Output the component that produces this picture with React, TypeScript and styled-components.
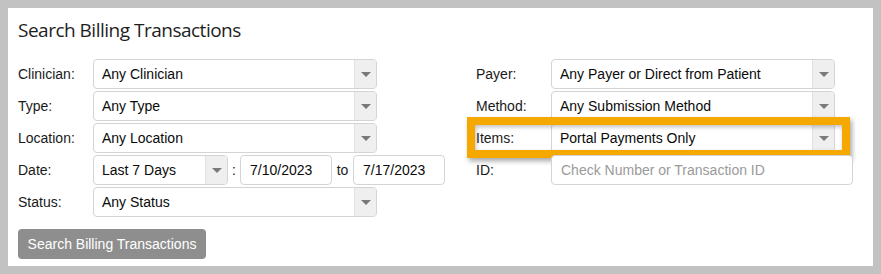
import React from 'react'
import styled, { createGlobalStyle } from 'styled-components'

const GlobalStyle = createGlobalStyle`
  html, body {
    background: #c2c2c2;
  }
  body {
    margin: 8px;
    font-family: "Liberation Sans", Arial, sans-serif;
  }
`

const LEFT_FIELDS = [
  { label: 'Clinician:', value: 'Any Clinician' },
  { label: 'Type:', value: 'Any Type' },
  { label: 'Location:', value: 'Any Location' },
]

const RIGHT_FIELDS = [
  { label: 'Payer:', value: 'Any Payer or Direct from Patient' },
  { label: 'Method:', value: 'Any Submission Method' },
]

const Select = ({ value, width }: { value: string; width: number }) => (
  <SelectBox $width={width}>
    <SelectValue>{value}</SelectValue>
    <ArrowCell />
  </SelectBox>
)

const App = () => {
  return (
    <>
      <GlobalStyle />
      <Panel>
        <Title>Search Billing Transactions</Title>

        <Columns>
          {/* left side */}
          <Column $width={428}>
            {LEFT_FIELDS.map(f => (
              <Row key={f.label}>
                <Label>{f.label}</Label>
                <Select value={f.value} width={284} />
              </Row>
            ))}
            <Row>
              <Label>Date:</Label>
              <Select value="Last 7 Days" width={135} />
              <Joiner $width={12}>:</Joiner>
              <TextInput $width={92} readOnly value="7/10/2023" />
              <Joiner $width={21}>to</Joiner>
              <TextInput $width={92} readOnly value="7/17/2023" />
            </Row>
            <Row>
              <Label>Status:</Label>
              <Select value="Any Status" width={284} />
            </Row>
          </Column>

          {/* right side */}
          <Column $width={378}>
            {RIGHT_FIELDS.map(f => (
              <Row key={f.label}>
                <Label>{f.label}</Label>
                <Select value={f.value} width={284} />
              </Row>
            ))}
            <Row>
              <Label>Items:</Label>
              <Select value="Portal Payments Only" width={284} />
              <Highlight />
            </Row>
            <Row>
              <Label>ID:</Label>
              <TextInput $width={302} placeholder="Check Number or Transaction ID" />
            </Row>
          </Column>
        </Columns>

        <SearchButton type="button">Search Billing Transactions</SearchButton>
      </Panel>
    </>
  )
}

export default App

const Panel = styled.div`
  width: 865px;
  height: 258px;
  box-sizing: border-box;
  background: #fff;
  padding: 10px 10px 0 10px;
`

const Title = styled.div`
  font-family: "Open Sans", "Noto Sans", sans-serif;
  font-size: 19px;
  letter-spacing: -0.5px;
  line-height: 24px;
  color: #1e1e1e;
  margin: 0 0 17px 0;
`

const Columns = styled.div`
  display: flex;
  gap: 30px;
`

const Column = styled.div<{ $width: number }>`
  width: ${p => p.$width}px;
  display: flex;
  flex-direction: column;
  gap: 2px;
`

const Row = styled.div`
  position: relative;
  display: flex;
  align-items: center;
  height: 30px;
`

const Label = styled.div`
  width: 75px;
  flex-shrink: 0;
  font-size: 14px;
  color: #1a1a1a;
`

const SelectBox = styled.div<{ $width: number }>`
  width: ${p => p.$width}px;
  height: 30px;
  box-sizing: border-box;
  display: flex;
  align-items: stretch;
  border: 1px solid #d4d4d4;
  border-radius: 4px;
  background: #fff;
  overflow: hidden;
`

const SelectValue = styled.div`
  flex: 1;
  display: flex;
  align-items: center;
  padding: 0 8px;
  font-size: 14px;
  color: #0a0a0a;
  white-space: nowrap;
`

const ArrowCell = styled.div`
  width: 21px;
  flex-shrink: 0;
  background: #efefef;
  border-left: 1px solid #e2e2e2;
  display: flex;
  align-items: center;
  justify-content: center;

  &::after {
    content: '';
    width: 0;
    height: 0;
    border-left: 5px solid transparent;
    border-right: 5px solid transparent;
    border-top: 5px solid #7a7a7a;
  }
`

const Joiner = styled.div<{ $width: number }>`
  width: ${p => p.$width}px;
  text-align: center;
  font-size: 14px;
  color: #1a1a1a;
`

const TextInput = styled.input<{ $width: number }>`
  width: ${p => p.$width}px;
  height: 30px;
  box-sizing: border-box;
  border: 1px solid #d4d4d4;
  border-radius: 4px;
  padding: 0 9px;
  font-family: "Liberation Sans", Arial, sans-serif;
  font-size: 14px;
  color: #0a0a0a;
  outline: none;

  &::placeholder {
    color: #9a9a9a;
  }
`

// annotation frame drawn over the Items row
const Highlight = styled.div`
  position: absolute;
  left: -9px;
  top: -6px;
  width: 383px;
  height: 41px;
  box-sizing: border-box;
  border: 8px solid #f5a800;
  box-shadow: 2px 3px 5px rgba(0, 0, 0, 0.35), inset 1px 2px 4px rgba(0, 0, 0, 0.25);
  pointer-events: none;
`

const SearchButton = styled.button`
  display: block;
  margin-top: 12px;
  height: 30px;
  width: 188px;
  padding: 0;
  border: none;
  border-radius: 4px;
  background: #8e8e8e;
  color: #fff;
  font-family: "Liberation Sans", Arial, sans-serif;
  font-size: 14px;
`
